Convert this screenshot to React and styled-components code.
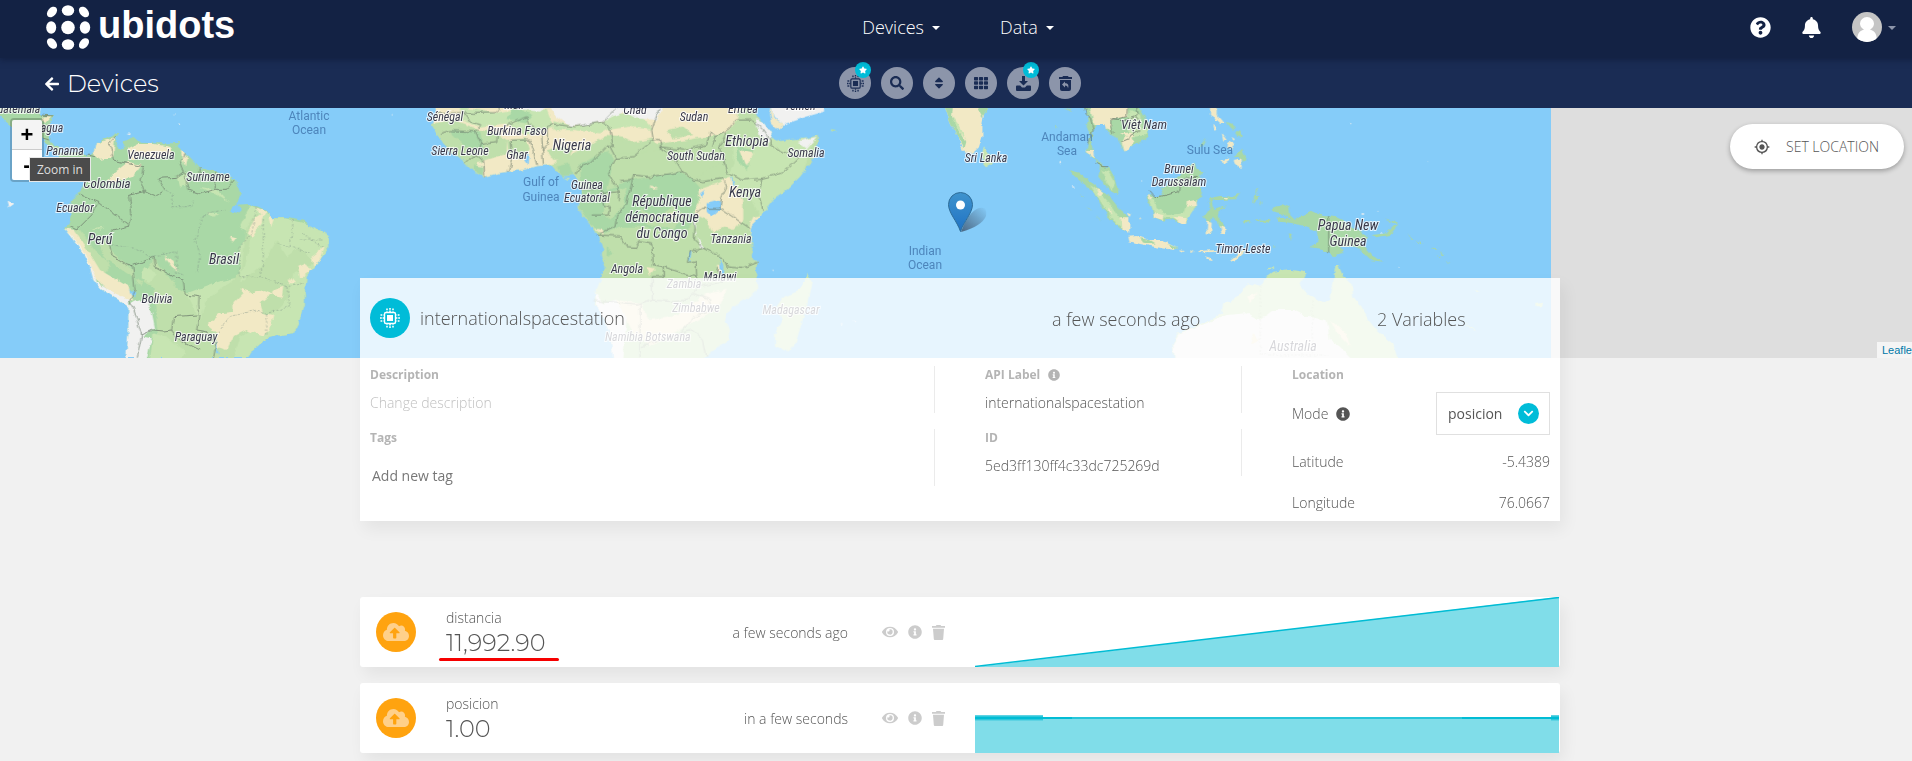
import React from "react";
import styled, { createGlobalStyle } from "styled-components";
import {
  FaArrowLeft,
  FaQuestionCircle,
  FaBell,
  FaSearch,
  FaSort,
  FaTh,
  FaStar,
  FaInfoCircle,
  FaEye,
  FaCloudUploadAlt,
  FaChevronDown,
} from "react-icons/fa";
import { MdMyLocation } from "react-icons/md";

const sans = `"Open Sans", "Noto Sans", sans-serif`;
const display = `"Montserrat", "Inter", sans-serif`;
const navy = "#1a2c54";
const cyan = "#00bcd8";

const GlobalStyle = createGlobalStyle`
  * { box-sizing: border-box; }
  body {
    margin: 0;
    background: #f1f1f1;
    color: #555;
    font: 300 14px/20px ${sans};
    overflow: hidden;
  }
  button, input, select { font: inherit; color: inherit; }
  svg { display: block; }
`;

/* The page runs 8px under the window's right edge, where the scrollbar sits. */
const Page = styled.div`
  width: calc(100% + 8px);
`;

const Center = styled.div`
  display: flex;
  align-items: center;
  justify-content: center;
`;

const Side = styled.div`
  display: flex;
  align-items: center;
  justify-content: ${(p) => (p.$end ? "flex-end" : "flex-start")};
`;

/* ---------- header ---------- */

const Header = styled.header`
  position: relative;
  z-index: 3;
  display: grid;
  grid-template-columns: 1fr auto 1fr;
  align-items: start;
  height: 58px;
  padding: 0 24px 0 20px;
  background: #132244;
  color: #fff;
  box-shadow: 0 2px 6px rgba(10, 20, 45, 0.5);
`;

const Logo = styled.a`
  display: flex;
  align-items: center;
  gap: 6px;
  height: 56px;
  padding-left: 26px;
  color: #fff;
  text-decoration: none;
  font: 700 38px/50px "Liberation Sans", sans-serif;
`;

const Wordmark = styled.span`
  padding-bottom: 6px;
`;

const NavButton = styled.button`
  display: flex;
  align-items: center;
  gap: 8px;
  height: 54px;
  padding: 0;
  border: 0;
  background: none;
  color: #fff;
  font-size: 18px;
`;

const Nav = styled.nav`
  display: flex;
  gap: 60px;
`;

const Caret = styled.span`
  border: 4px solid transparent;
  border-top-color: ${(p) => (p.$dim ? "#8c95aa" : "#fff")};
  border-bottom: 0;
  margin-top: 2px;
`;

const IconButton = styled.button`
  display: flex;
  align-items: center;
  gap: 6px;
  height: 54px;
  padding: 0;
  border: 0;
  background: none;
  color: #fff;
  font-size: 21px;
`;

const UserTools = styled(Side)`
  gap: 30px;
`;

/* ---------- toolbar ---------- */

const Toolbar = styled.div`
  display: grid;
  grid-template-columns: 1fr auto 1fr;
  height: 50px;
  padding: 0 44px;
  background: ${navy};
  color: #fff;
`;

const Back = styled.a`
  display: flex;
  align-items: center;
  gap: 7px;
  padding-top: 2px;
  color: #fff;
  text-decoration: none;
  font: 300 24px/32px ${display};
  svg { width: 16px; height: 16px; }
`;

const Tools = styled(Center)`
  gap: 10px;
`;

const Tool = styled.button`
  position: relative;
  display: flex;
  align-items: center;
  justify-content: center;
  width: 32px;
  height: 32px;
  padding: 0;
  border: 0;
  border-radius: 50%;
  background: #8c95aa;
  color: ${navy};
  font-size: 14px;
`;

const Badge = styled.span`
  position: absolute;
  top: -5px;
  right: 0;
  display: flex;
  align-items: center;
  justify-content: center;
  width: 16px;
  height: 16px;
  border-radius: 50%;
  background: ${cyan};
  color: #fff;
  font-size: 8px;
`;

/* ---------- map ---------- */

const MapPane = styled.section`
  position: relative;
  height: 250px;
  overflow: hidden;
  background: #dedede;
`;

const ZoomControl = styled.div`
  position: absolute;
  top: 10px;
  left: 10px;
  border: 2px solid rgba(0, 0, 0, 0.2);
  border-radius: 4px;
  background-clip: padding-box;
`;

const ZoomButton = styled.button`
  display: block;
  width: 30px;
  height: 30px;
  padding: 0;
  border: 0;
  border-bottom: ${(p) => (p.$first ? "1px solid #ccc" : "0")};
  border-radius: ${(p) => (p.$first ? "2px 2px 0 0" : "0 0 2px 2px")};
  background: ${(p) => (p.$first ? "#f4f4f4" : "#fff")};
  color: #000;
  font: 700 22px/26px "Liberation Sans", sans-serif;
`;

const Tooltip = styled.span`
  position: absolute;
  top: 49px;
  left: 29px;
  padding: 0 7px;
  border: 1px solid #e8e8e8;
  background: #4b4b4b;
  color: #dedede;
  font: 400 12px/23px ${sans};
`;

const SetLocation = styled.button`
  position: absolute;
  top: 16px;
  right: 16px;
  display: flex;
  align-items: center;
  gap: 16px;
  height: 45px;
  padding: 0 25px 0 24px;
  border: 0;
  border-radius: 23px;
  background: #fff;
  font-size: 14px;
  box-shadow: 0 2px 5px rgba(0, 0, 0, 0.3);
  svg { width: 16px; height: 16px; }
`;

const Attribution = styled.div`
  position: absolute;
  right: 0;
  bottom: 0;
  padding: 0 5px;
  background: rgba(255, 255, 255, 0.7);
  font: 400 11px/16px "Liberation Sans", sans-serif;
  a { color: #0078a8; text-decoration: none; }
`;

const MapText = styled.text`
  font: italic 400 ${(p) => p.$size || 12}px "Roboto Condensed", "Liberation Sans Narrow", Roboto, sans-serif;
  text-anchor: middle;
  fill: #39394a;
  stroke: rgba(255, 255, 255, 0.75);
  stroke-width: 2px;
  paint-order: stroke;
`;

const SeaText = styled.text`
  font: 400 12px Roboto, sans-serif;
  text-anchor: middle;
  fill: #4d85bb;
`;

/* ---------- device card ---------- */

const Main = styled.main`
  position: relative;
  z-index: 1;
  max-width: 1200px;
  margin: -80px auto 8px;
`;

const shadow = "4px 8px 16px rgba(0, 0, 0, 0.06)";

const Card = styled.section`
  margin-bottom: 76px;
  box-shadow: ${shadow};
`;

const CardHead = styled.div`
  display: grid;
  grid-template-columns: 1fr 325px 173px;
  align-items: center;
  height: 80px;
  padding: 0 10px;
  background: rgba(255, 255, 255, 0.8);
  font-size: 18px;
  line-height: 28px;
  > span { padding-top: 2px; }
`;

const DeviceName = styled.h1`
  display: flex;
  align-items: center;
  gap: 10px;
  margin: 0;
  font: inherit;
`;

const Round = styled.span`
  display: flex;
  align-items: center;
  justify-content: center;
  flex: none;
  width: 40px;
  height: 40px;
  border-radius: 50%;
  background: ${(p) => p.$color};
  color: ${(p) => p.$ink || "#fff"};
  font-size: 26px;
`;

const CardBody = styled.div`
  display: grid;
  grid-template-columns: 1fr 307px 308px;
  height: 163px;
  padding: 8px 10px 0;
  background: #fff;
`;

const Column = styled.div`
  display: flex;
  flex-direction: column;
  gap: 16px;
  padding-left: ${(p) => (p.$inset ? "50px" : "0")};
`;

const Field = styled.div`
  display: flex;
  flex-direction: column;
  gap: ${(p) => (p.$loose ? "19px" : "9px")};
  border-right: 1px solid #ebebeb;
`;

const FieldLabel = styled.label`
  display: flex;
  align-items: center;
  gap: 8px;
  font: 700 12px/18px ${sans};
  color: #b4b4b4;
`;

const TextInput = styled.input`
  width: 300px;
  height: 20px;
  padding: 0 ${(p) => (p.$strong ? "2px" : "0")};
  border: 0;
  background: none;
  font-weight: ${(p) => (p.$strong ? 400 : 300)};
  &::placeholder { color: ${(p) => (p.$strong ? "#777" : "#c0c0c0")}; opacity: 1; }
`;

const Location = styled.div`
  padding-left: 50px;
`;

const LocationRow = styled.div`
  display: flex;
  align-items: center;
  justify-content: space-between;
  height: ${(p) => (p.$tall ? "43px" : "36px")};
  margin-top: ${(p) => (p.$tall ? "8px" : "5px")};
  margin-bottom: ${(p) => (p.$tall ? "9px" : "0")};
`;

const ModeLabel = styled.label`
  display: flex;
  align-items: center;
  gap: 8px;
`;

const SelectBox = styled.span`
  position: relative;
  display: flex;
  align-items: center;
`;

const Select = styled.select`
  appearance: none;
  width: 114px;
  height: 43px;
  padding: 0 36px 0 11px;
  border: 1px solid #e0e0e0;
  border-radius: 0;
  background: #fff;
  font-weight: 400;
`;

const SelectMark = styled.span`
  position: absolute;
  right: 11px;
  display: flex;
  align-items: center;
  justify-content: center;
  width: 21px;
  height: 21px;
  border-radius: 50%;
  background: ${cyan};
  color: #fff;
  font-size: 11px;
  pointer-events: none;
`;

/* ---------- variables ---------- */

const VariableList = styled.div`
  display: flex;
  flex-direction: column;
  gap: 16px;
`;

const VariableRow = styled.article`
  display: flex;
  align-items: center;
  height: 70px;
  padding: 0 1px 0 16px;
  border-radius: 3px;
  background: #fff;
  box-shadow: ${shadow};
`;

const Reading = styled.div`
  flex: 1;
  padding: 2px 0 0 30px;
`;

const VariableName = styled.div`
  line-height: 20px;
`;

const Value = styled.div`
  position: relative;
  width: max-content;
  font: 300 24px/30px ${display};
`;

const RedMark = styled.span`
  position: absolute;
  left: -7px;
  bottom: -3px;
  width: 120px;
  height: 3px;
  border-radius: 2px;
  background: #f60000;
`;

const Time = styled.time`
  padding-top: 2px;
`;

const Actions = styled.div`
  display: flex;
  align-items: center;
  gap: 10px;
  margin: 0 30px 0 34px;
`;

const Action = styled.button`
  padding: 0;
  border: 0;
  background: none;
  color: #ccc;
  font-size: 14px;
`;

const ChartBox = styled.div`
  width: 584px;
  height: 70px;
`;

/* ---------- drawings ---------- */

const LogoMark = () => (
  <svg width="46" height="46" viewBox="0 0 46 46" fill="#fff" aria-hidden="true">
    <ellipse cx="22" cy="5.5" rx="6.2" ry="5.2" />
    <ellipse cx="22" cy="39.5" rx="6.2" ry="5.2" />
    <ellipse cx="5.2" cy="22.5" rx="5" ry="6.2" />
    <ellipse cx="39" cy="22.5" rx="5.2" ry="6.2" />
    <circle cx="22" cy="22.5" r="6.8" />
    <ellipse cx="6" cy="7" rx="6" ry="4.2" transform="rotate(-48 6 7)" />
    <ellipse cx="38" cy="7" rx="6" ry="4.2" transform="rotate(48 38 7)" />
    <ellipse cx="6" cy="38.5" rx="6" ry="4.2" transform="rotate(48 6 38.5)" />
    <ellipse cx="38" cy="38.5" rx="6" ry="4.2" transform="rotate(-48 38 38.5)" />
  </svg>
);

const Chip = ({ size }) => (
  <svg width={size} height={size} viewBox="0 0 20 20" fill="none" stroke="currentColor" aria-hidden="true">
    <rect x="4.5" y="4.5" width="11" height="11" rx="1.5" strokeWidth="1.400" />
    <rect x="7" y="7" width="6" height="6" fill="currentColor" stroke="none" />
    <path
      strokeWidth="1.6"
      strokeDasharray="1.800 .8"
      d="M7 .5V3.500M10 0V4M13 .5V3.500M7 19.500V16.500M10 20V16M13 19.500V16.500M.5 7H3.500M0 10H4M.5 13H3.500M19.500 7H16.500M20 10H16M19.500 13H16.500"
    />
  </svg>
);

const Download = () => (
  <svg width="15" height="15" viewBox="0 0 15 15" fill="currentColor" aria-hidden="true">
    <path d="M6 0h3v5h3L7.500 9.600 3 5h3z" />
    <path d="M1 9.500h3.200l1.800 2h3l1.800-2H14a1 1 0 0 1 1 1V14a1 1 0 0 1-1 1H1a1 1 0 0 1-1-1v-3.500a1 1 0 0 1 1-1z" />
  </svg>
);

const TrashRestore = () => (
  <svg width="13" height="15" viewBox="0 0 13 15" aria-hidden="true">
    <path fill="currentColor" d="M4 0h5l.6 1H13v2H0V1h3.400zM1 4h11v9a2 2 0 0 1-2 2H3a2 2 0 0 1-2-2z" />
    <path fill="#8c95aa" d="M6 5.500v1.800c3 0 4 1.700 3 5.200-.3-2-1-2.900-3-2.900v1.900L3 8.500z" />
  </svg>
);

const Trash = () => (
  <svg width="13" height="15" viewBox="0 0 13 15" fill="currentColor" aria-hidden="true">
    <path d="M4.500 0h4l.7 1H13v1.800H0V1h3.800zM1 3.800h11L11.200 14a1 1 0 0 1-1 1H2.800a1 1 0 0 1-1-1z" />
  </svg>
);

const Avatar = () => (
  <svg width="30" height="30" viewBox="0 0 30 30" aria-hidden="true">
    <clipPath id="avatar"><circle cx="15" cy="15" r="15" /></clipPath>
    <g clipPath="url(#avatar)">
      <path fill="#c5c5c5" d="M0 0h30v30H0z" />
      <path fill="#fff" d="M5 30c0-8 2-11 7-12.500C9 16 8 13.500 8 11.500a7 6.500 0 0 1 14 0c0 2-1 4.500-4 6 5 1.500 7 4.500 7 12.500z" />
    </g>
  </svg>
);

const AreaChart = ({ kind }) => (
  <svg width="100%" height="70" viewBox="0 0 584 70" preserveAspectRatio="none" role="img" aria-label="Recent values">
    {kind === "ramp" ? (
      <>
        <path fill="#80dde9" d="M0 70L584 0V70z" />
        <path stroke="#00bcd4" strokeWidth="1.500" d="M0 69.500L584 .5" />
      </>
    ) : (
      <>
        <path fill="#80dde9" d="M0 35H584V70H0z" />
        <path stroke="#26c6da" strokeWidth="2" d="M0 35H584" />
        <path stroke="#00bcd4" strokeWidth="2" d="M0 35H97M487 35H584" />
        <path stroke="#5fd3e3" strokeWidth="6" d="M0 35H68M576 35H584" />
        <path stroke="#00bcd4" strokeWidth="3" d="M0 35H68M576 35H584" />
      </>
    )}
  </svg>
);

const LAND = "#bfdfab";
const LIGHT = "#c7e5b2";
const LUSH = "#a9d8a6";
const SAND = "#f2e9c5";
const PALE = "#f1f1f0";
const SEA = "#85ccf9";

/* Coastlines and borders are kept on a grid three times finer than the map. */
const SouthAmerica = () => (
  <g transform="translate(0 -108) scale(.33333)">
    <clipPath id="sa">
      <path d="M262 470L285 455 290 430 315 415 335 405 345 395 358 395 345 415 355 440 372 444 372 425 400 410 420 428 460 430 520 430 540 428 530 440 555 460 575 480 600 505 650 515 690 530 705 540 720 565 725 580 710 610 690 632 712 640 725 628 712 614 750 615 775 620 800 632 820 655 870 655 910 662 950 690 975 695 985 715 985 745 960 780 940 805 920 830 915 870 915 915 900 960 880 1000 840 1005 800 1015 760 1050 745 1074 378 1074 385 1000 385 920 340 890 300 865 280 840 270 800 240 745 215 710 195 685 210 670 215 645 200 630 215 605 240 570 255 545 270 510z" />
    </clipPath>
    <path fill={LUSH} d="M0 324H115L120 345 162 345 150 365 148 410 155 432 175 440 180 460 240 455 270 475 262 500 250 500 225 475 180 470 150 440 130 415 100 390 60 375 30 375 0 350z" />
    <path fill={SAND} d="M125 350L155 348 135 370z" />
    <g clipPath="url(#sa)">
      <path fill={LUSH} d="M180 380H1000V1080H180z" />
      <path fill={LIGHT} d="M750 615L800 640 990 690 990 800 915 870 915 1000 740 1080 480 1080 520 960 560 880 640 850 720 830 720 740 750 700 720 680z" />
      <path fill={LAND} d="M740 680L770 640 790 660 750 720 735 800 700 840 620 900 600 960 560 880 530 860 460 775 420 860 390 800 340 760 320 720 300 740 330 800 300 840 190 690 240 690 290 760 380 820 460 860 480 1080 700 1080 720 1010 800 960 860 900 880 820 940 790 900 740 860 770 830 720 790 790 720 850z" />
      <path fill={SAND} d="M290 430L320 420 345 410 340 470 300 480 280 465zM385 445L410 432 460 432 510 440 520 460 480 475 430 470 390 480zM340 520L385 485 425 495 400 530 350 545 320 550zM540 430L560 470 555 500 545 470z" />
      <path fill={SAND} d="M195 685L220 690 260 745 300 810 385 860 400 905 340 885 280 830 240 740z" />
      <path fill={PALE} d="M190 680L215 705 245 745 278 810 290 845 335 875 390 900 385 925 330 900 270 850z" />
      <path fill={PALE} d="M380 920L405 905 440 895 455 935 465 985 430 1010 455 1015 440 1080 375 1080z" />
      <path fill={SAND} d="M700 910L730 880 720 865 760 880 790 870 820 880 780 910 790 940 820 945 810 990 790 1010 740 990 700 1010 680 1050 650 1040 650 1000 620 975 660 940 700 935zM490 765L520 785 535 815 515 800zM895 800L920 790 935 810 900 835zM740 700L765 655 790 640 785 670 755 715zM765 620L800 635 790 650zM935 770L975 740 960 780 940 800zM820 870L850 860 845 890 820 885zM830 640L815 680 808 650zM870 830L885 850 870 850zM690 710L710 715 700 728z" />
      <path fill={LIGHT} d="M530 530L560 520 565 550 540 560zM270 685L310 680 300 690zM430 800L470 820 450 850 425 835zM620 640L655 643 640 650zM600 560L650 570 690 610 660 590zM460 1000L500 1010 560 1060 540 1074 450 1074z" />
      <path fill={SEA} d="M350 430L360 420 372 430 368 448 352 446zM388 870L405 880 406 892 392 885zM650 1020L655 1060 648 1060z" />
    </g>
    <path fill={LUSH} d="M715 614L750 612 745 628 722 632zM532 424L540 422 540 432z" />
    <path fill={PALE} d="M380 402L392 400 390 406zM20 605L40 614 25 625zM520 340L525 342 524 346zM540 365L543 372 539 372z" />
    <g fill="none" stroke="#6d7b6c" strokeOpacity=".75" strokeWidth="3">
      <path d="M348 405L330 430 340 480 380 490 430 500 423 540 435 575 388 585 395 640 385 678 340 690 325 715 335 765 375 790 398 797 462 772 466 800 520 830 550 840 555 885 597 890 596 910 598 940 590 990 620 995 650 1030 640 1074" />
      <path d="M435 575L465 590 495 570 475 535 530 532 550 515 540 490 555 460M550 515L565 570 600 582 645 568 680 568 702 540M600 505L600 545M650 515L645 565M238 582L295 605 275 645 230 690 210 680M295 605L320 625 350 650 385 678M398 797L405 870 388 905 400 925 425 1005 460 990 490 993 515 990 520 950 590 945M515 990L530 1015 600 1050M425 1005L412 1070M262 465L285 470M120 345L160 348M130 415L150 420" />
    </g>
    <g fill="none" stroke="#7c8f86" strokeOpacity=".55" strokeWidth="2.500" strokeDasharray="7 5">
      <path d="M500 570L520 585 515 620 575 620 580 600M335 735L405 745 450 770 530 755 530 820 550 825M610 645L585 720 600 765 590 820M610 645L680 630M720 740L720 830 780 830 860 860 910 850M770 620L755 700 720 740M790 660L790 780 780 830M880 660L870 740 830 730M900 720L970 720M905 700L975 745M860 860L870 920 800 940 770 930 690 950 650 1000M800 940L800 1010M930 760L880 740" />
    </g>
  </g>
);

const Africa = () => (
  <g transform="translate(340 -8) scale(.33333)">
    <clipPath id="af">
      <path d="M285 20L290 45 275 75 290 100 310 130 345 165 375 190 400 215 432 232 470 220 505 215 550 210 590 198 635 196 650 215 670 230 700 225 712 240 722 265 722 290 712 320 730 350 760 385 775 405 790 450 785 465 800 500 785 530 765 580 765 610 790 650 810 700 820 780 1085 780 1130 745 1165 720 1170 690 1155 660 1165 630 1215 600 1255 565 1250 500 1250 485 1235 470 1240 430 1230 400 1235 375 1265 345 1300 300 1340 270 1380 230 1410 190 1430 150 1435 105 1400 115 1350 118 1310 125 1290 115 1300 95 1280 85 1265 65 1235 20z" />
    </clipPath>
    <g clipPath="url(#af)">
      <path fill={LAND} d="M260 10H1440V790H260z" />
      <path fill={SAND} d="M285 20H1200L1190 60 1160 100 1100 110 1040 120 960 130 900 140 850 110 800 105 760 130 700 160 660 170 640 190 560 210 470 222 430 232 410 190 440 180 500 160 500 120 470 100 420 90 340 60 280 70z" />
      <path fill={LIGHT} d="M360 20L470 40 560 24 620 30 640 80 560 110 500 70 420 80 360 60zM640 60L700 80 790 65 830 40 900 45 940 90 870 80 800 90 780 100 700 90 640 90zM1180 120L1300 110 1420 115 1390 220 1260 350 1230 300 1160 240 1180 190z" />
      <path fill={LAND} d="M800 110L860 130 940 115 960 150 900 160 820 160zM620 150L660 140 700 150 680 175 640 180zM500 120L560 115 570 150 540 180 505 160zM980 90L1030 80 1060 105 1000 115z" />
      <path fill={PALE} d="M630 20H970L950 60 890 55 850 35 800 60 740 75 690 78 650 50zM1245 50L1270 70 1300 95 1285 125 1255 100zM1370 125L1430 110 1400 145zM500 20L620 20 600 35 560 30z" />
      <path fill={LUSH} d="M720 195L800 150 820 180 815 220 800 270 870 240 940 230 1020 215 1060 240 1085 270 1070 330 1050 380 1020 400 960 390 890 380 840 380 790 400 750 370 715 320 725 270zM400 195L430 200 430 230 400 210zM330 90L420 95 430 150 380 140 340 110zM1190 140L1240 150 1220 210 1190 180zM650 200L690 190 700 225 665 228zM800 440L820 460 800 470zM520 20L500 60 560 70 580 45z" />
      <path fill={LAND} d="M800 280L860 260 850 320 810 360 790 340zM900 330L960 345 1000 320 1040 350 1000 385 920 375z" />
      <path fill={SAND} d="M1075 270L1130 250 1170 230 1190 260 1210 300 1210 360 1180 390 1150 380 1120 400 1100 360 1060 340 1080 310zM1230 370L1240 350 1270 345 1230 400zM765 385L790 390 790 405zM925 258L955 265 940 270zM985 340L1010 335 1000 360zM1200 150L1240 160 1220 200zM1130 490L1150 500 1140 530zM920 500L945 505 930 525z" />
      <path fill={LAND} d="M1070 130L1140 100 1150 180 1060 240 980 160z" />
      <path fill={PALE} d="M765 580L790 610 830 600 860 650 850 780 800 780zM1060 360L1070 360 1066 400 1090 440 1080 445z" />
      <path fill={SAND} d="M830 600L900 610 930 660 1000 650 1100 580 1160 570 1140 620 1000 700 930 740 880 700z" />
      <path fill={SEA} d="M1100 310L1140 300 1142 325 1115 350 1100 335zM1080 280L1095 270 1085 290zM1045 465L1055 450 1050 490zM1140 470L1150 500 1148 540 1142 520zM1172 225L1188 260 1180 260zM555 160L568 165 566 195 555 180z" />
    </g>
    <path fill={PALE} d="M1295 20H1452V35L1400 50 1330 75 1300 50z" />
    <path fill={SAND} d="M1295 20L1300 55 1330 72 1310 86 1295 70 1290 40z" />
    <path fill={LIGHT} d="M1400 517L1415 545 1410 570 1400 620 1385 670 1365 735 1335 755 1305 740 1305 700 1325 660 1310 620 1330 590 1380 570 1395 540zM1472 88L1488 90 1475 94zM675 235L690 232 685 240z" />
    <path fill={PALE} d="M1505 672L1512 674 1508 679zM1540 658L1546 660 1542 664zM155 42L159 44 157 48zM1300 508L1304 510 1302 514z" />
    <g fill="none" stroke="#6d7b6c" strokeOpacity=".75" strokeWidth="3">
      <path d="M290 40L370 38 400 40 470 38 480 20M370 38L385 62 420 75 405 95 330 92 300 100M405 95L422 130 410 165 432 185 434 232M375 188L395 170 410 165M422 130L470 125 472 105 500 75 560 50 570 75 610 100 625 80 640 72 700 80 790 65 830 25M510 120L515 175 505 215M510 120L570 120 580 150 590 195M605 105L610 195M625 80L625 130 607 150" />
      <path d="M790 65L810 90 820 140 800 138 750 190 720 200 708 222M810 140L828 175 805 220 838 275 835 300M828 175L880 170 940 120 958 118 965 150 1000 170 1028 215 1060 240 1090 245M940 120L935 90 945 60 960 24M958 140L1030 150 1100 135 1110 95 1125 110 1115 140M1125 110L1160 95 1185 60 1235 60 1270 90 1290 120 1290 135 1340 160 1380 170M1380 170L1325 220 1265 235 1205 240 1160 215 1150 175 1140 140 1160 95M1265 235L1258 290 1270 335M1090 245L1150 235 1160 260 1145 290 1140 325 1085 325 1062 345M1140 325L1230 385M1060 345L1065 380 1063 420 1090 445 1150 475 1160 500 1205 505 1250 487" />
      <path d="M880 225L930 230 1000 220 1028 215M880 225L875 250 860 310 830 350 825 380 780 400M838 245L880 240M720 268H785V280L838 275M785 280L790 315 808 320 805 345 755 345M770 405L840 408 860 440 890 442 900 425 935 432 940 495 970 500 970 530 937 530V600L890 615 760 602M970 500L1030 520 1070 530 1068 485 1045 490 1050 455 1090 445M937 600L1000 605 1040 600 1075 560 1150 545 1130 500M900 615V775M905 740L1020 700 1060 650 1120 630 1110 600 1060 580M1020 700L1060 690 1090 720 1100 770" />
    </g>
  </g>
);

const India = () => (
  <g transform="translate(820 -108) scale(.357 .33333)">
    <path fill={SAND} d="M350 320L365 365 385 410 400 450 425 465 445 445 455 410 455 370 460 340 475 320z" />
    <path fill={LUSH} d="M350 320L365 365 385 410 402 445 407 425 385 385 370 350 372 320zM440 320L475 320 455 350z" />
    <path fill={LIGHT} d="M372 350L392 380 410 420 395 400 376 370zM455 455L460 440 478 465 482 490 465 502 455 490z" />
    <path fill={LUSH} d="M655 378L660 380 658 390zM680 324H705L700 330zM30 388L45 390 36 393z" />
    <path fill={PALE} d="M0 320H12L0 340zM672 483L676 485 673 490z" />
  </g>
);

const Oceania = () => (
  <g transform="translate(1040 -8) scale(.33333)">
    <path fill={LUSH} d="M130 20L145 50 140 80 150 105 148 125 140 155 155 170 165 175 180 200 175 230 195 255 215 275 235 285 235 265 225 235 205 205 180 190 160 165 155 130 160 90 170 75 190 75 200 90 215 100 230 115 240 130 255 158 270 140 300 130 325 110 327 75 315 45 300 20z" />
    <path fill={SAND} d="M150 20H262L265 50 235 55 212 65 212 90 195 85 190 75 165 75 158 60zM255 110L275 105 285 125 255 158 245 130zM140 150L160 150 162 172 150 165zM240 100L290 95 275 115z" />
    <path fill={LIGHT} d="M270 30L300 40 305 80 325 90 320 105 285 110 260 90zM185 210L205 215 225 250 215 270 195 240z" />
    <path fill={LUSH} d="M88 210L120 218 135 235 165 255 185 275 205 285 225 310 240 330 265 350 268 400 240 385 205 350 185 320 165 280 130 250 105 230z" />
    <path fill={LIGHT} d="M150 255L180 275 200 300 235 350 262 360 262 395 230 372 195 325z" />
    <path fill={SAND} d="M170 265L190 280 180 290zM242 352L268 352 268 402 246 385zM205 325L215 340 205 335z" />
    <path fill={SAND} d="M265 410L290 408 330 420 370 420 410 440 400 450 350 442 300 432 268 424zM418 448L432 450 422 455zM448 450L465 456 450 458zM478 452L530 450 530 456 480 457zM492 468L515 475 518 480 500 476zM570 480L600 455 622 446 592 475 575 484z" />
    <path fill={LUSH} d="M300 415L330 420 350 432 310 428zM385 430L412 442 395 446z" />
    <path fill={LUSH} d="M320 290L330 278 345 290 370 285 360 262 390 250 420 225 440 195 465 190 470 210 495 215 475 235 480 270 490 290 470 300 465 320 445 345 440 370 425 372 400 358 365 362 340 350 335 320 325 310z" />
    <path fill={LIGHT} d="M322 290L345 300 350 325 385 345 430 340 440 310 468 300 460 330 440 360 400 355 345 350 335 318z" />
    <path fill={SAND} d="M322 282L338 290 330 302zM340 340L370 345 368 360 342 352zM400 350L440 355 438 372 424 372zM440 305L465 300 468 318 440 320z" />
    <path fill={LUSH} d="M500 395L510 370 490 350 510 320 505 295 540 288 580 290 598 280 585 298 540 300 515 300 520 330 558 318 535 335 540 360 555 375 550 400 530 365 518 350 512 365 515 402z" />
    <path fill={SAND} d="M502 362L515 365 514 402 500 400zM540 378L558 385 560 400 545 398zM545 291L565 291 560 296zM300 352L306 354 304 360zM260 335L272 340 270 354z" />
    <path fill={SAND} d="M510 20H530L530 45 545 62 560 70 540 68 525 55 510 45zM545 100L560 120 550 125zM565 125L582 132 572 150 562 140zM520 75L530 82 525 95zM580 180L605 175 605 205 585 192zM545 180L575 175 560 185 548 195zM575 110L585 118 580 122z" />
    <path fill={LUSH} d="M560 65L585 75 580 90 570 80zM585 92L602 95 605 115 592 110zM590 160L605 145 620 180 610 185 600 170 582 172zM480 140L500 115 490 140z" />
    <path fill={LUSH} d="M640 310L642 290 650 265 655 265 645 285 658 285 648 300zM612 360H630L628 368 614 367zM645 358L690 360 690 368 650 362zM750 400L758 402 752 424zM660 300L664 308 660 318zM700 435L706 437 702 442z" />
    <path fill={LUSH} d="M695 325L725 312 748 322 750 345 765 360 790 345 815 332 850 348 880 350 920 370 960 395 985 410 960 425 985 450 1005 475 1030 485 990 480 965 455 950 440 900 440 910 460 880 465 860 455 845 450 812 445 820 435 835 425 830 395 800 380 760 370 720 365 712 352 750 360 725 340 700 335z" />
    <path fill={LUSH} d="M995 405L1040 400 1062 378 1072 378 1050 405 1010 412zM1035 355L1060 370 1074 380 1066 366zM1102 403L1120 420 1115 420zM1130 422L1148 428 1140 430zM1172 443L1190 450 1180 450zM1200 452L1212 465 1205 465zM1190 465L1204 472 1198 474zM1218 484L1230 488 1224 491z" />
    <path fill={LIGHT} d="M403 780L398 730 415 700 460 680 510 660 545 640 550 605 570 610 600 580 625 550 660 560 680 530 700 515 740 508 790 515 797 520 780 555 800 580 850 610 870 600 880 550 885 495 895 495 910 530 935 550 940 590 965 620 985 660 1010 690 1060 730 1073 780zM682 504L705 502 700 508 684 508z" />
    <path fill={PALE} d="M405 780L400 730 420 700 500 670 560 645 620 640 660 660 700 630 760 630 800 650 860 660 870 720 900 740 940 780z" />
    <path fill={SAND} d="M620 590L650 580 630 610zM870 660L920 700 930 740 890 700zM640 700L660 720 630 730z" />
    <path fill={LIGHT} d="M1275 665L1310 695 1290 685zM1485 612L1510 608 1505 620 1490 618zM1305 568L1320 578 1310 576z" />
    <path fill={PALE} d="M930 71L934 73 932 77zM1160 186L1164 188 1162 190zM58 184L62 186 60 190zM96 258L106 262 98 263zM305 236L309 239 306 241zM965 340H972V344H965zM1012 332L1016 334 1012 336zM1020 396L1026 398 1022 402zM1076 500L1080 502 1077 504z" />
    <path fill={LUSH} d="M120 285L130 292 124 290zM140 320L152 332 144 328zM168 345L184 362 172 352z" />
    <g fill="none" stroke="#6d7b6c" strokeOpacity=".75" strokeWidth="3">
      <path d="M135 24L140 45 152 55 160 90 145 130M262 24L260 50 215 60 210 75 220 100M215 60L250 62 285 50 295 40 290 24M285 50L298 65 295 95 270 105 265 120 245 128M170 190L190 200 205 200M330 272L345 290 370 288 415 275 425 240 435 235 470 232M866 348V462" />
      <path strokeOpacity=".3" strokeDasharray="6 5" d="M661 560V765H866M817 600V765" />
    </g>
  </g>
);

const landLabels = [
  ["uatemala", 19, 5], ["agua", 52, 24], ["Panama", 65, 47], ["Venezuela", 151, 51],
  ["Suriname", 208, 73], ["Colombia", 107, 80, 13], ["Ecuador", 75, 104],
  ["Perú", 100, 136, 14], ["Brasil", 224, 156, 14], ["Bolivia", 157, 195], ["Paraguay", 196, 233],
  ["Mali", 514, 1], ["Chad", 635, 6], ["Sénégal", 445, 13], ["Burkina Faso", 517, 27],
  ["Nigeria", 572, 42, 14], ["Sierra Leone", 460, 47], ["Ghar", 517, 51], ["Sudan", 694, 13],
  ["Eritrea", 743, 5], ["Yemen", 800, 2], ["Ethiopia", 747, 38, 14], ["South Sudan", 696, 52],
  ["Somalia", 806, 49], ["Guinea", 587, 81], ["Ecuatorial", 587, 94], ["Kenya", 745, 89, 14],
  ["République", 662, 98, 14], ["démocratique", 662, 114, 14], ["du Congo", 662, 130, 14],
  ["Tanzania", 731, 135], ["Angola", 627, 165], ["Malawi", 720, 173], ["Zambia", 684, 180],
  ["Zimbabwe", 696, 204], ["Madagascar", 791, 206], ["Namibia", 624, 233], ["Botswana", 668, 233],
  ["Sri Lanka", 986, 54], ["Việt Nam", 1144, 21, 13], ["Brunei", 1179, 65], ["Darussalam", 1179, 78],
  ["Papua New", 1348, 122, 14], ["Guinea", 1348, 138, 14], ["Timor-Leste", 1243, 145], ["Australia", 1293, 243, 14],
];

const seaLabels = [
  ["Atlantic", 309, 12], ["Ocean", 309, 26], ["Gulf of", 541, 78], ["Guinea", 541, 93],
  ["Indian", 925, 147], ["Ocean", 925, 161], ["Andaman", 1067, 33], ["Sea", 1067, 47], ["Sulu Sea", 1210, 46],
];

const WorldMap = () => (
  <svg width="1551" height="250" viewBox="0 0 1551 250" role="img" aria-label="Map">
    <defs>
      <filter id="coast" x="0" y="0" width="1551" height="250" filterUnits="userSpaceOnUse">
        <feTurbulence type="fractalNoise" baseFrequency=".13" numOctaves="3" seed="4" />
        <feDisplacementMap in="SourceGraphic" scale="5" xChannelSelector="R" yChannelSelector="G" />
      </filter>
      <linearGradient id="pin" x1="0" y1="0" x2="0" y2="1">
        <stop offset="0" stopColor="#3f93cd" />
        <stop offset="1" stopColor="#1f72c4" />
      </linearGradient>
      <linearGradient id="pinShade" x1="0" y1="1" x2="1" y2="0">
        <stop offset="0" stopColor="#223" stopOpacity=".6" />
        <stop offset="1" stopColor="#223" stopOpacity="0" />
      </linearGradient>
    </defs>
    <rect width="1551" height="250" fill={SEA} />
    <g filter="url(#coast)">
      <SouthAmerica />
      <Africa />
      <India />
      <Oceania />
    </g>
    {seaLabels.map(([t, x, y]) => <SeaText key={t + x} x={x} y={y}>{t}</SeaText>)}
    {landLabels.map(([t, x, y, s]) => <MapText key={t + x + y} x={x} y={y} $size={s}>{t}</MapText>)}
    <path fill="url(#pinShade)" d="M961 124Q968 104 979 100 988 98 986 108 982 118 961 124z" />
    <path
      fill="url(#pin)"
      stroke="#2e6c97"
      d="M960.500 123.500C957 113 948.500 105 948.500 96.500a12 12 0 0 1 24 0C972.500 105 964 113 960.500 123.500z"
    />
    <circle cx="960.500" cy="97" r="4.500" fill="#fff" />
  </svg>
);

/* ---------- page ---------- */

const tools = [
  { label: "Add device", icon: <Chip size={17} />, starred: true },
  { label: "Search", icon: <FaSearch /> },
  { label: "Sort", icon: <FaSort /> },
  { label: "Grid view", icon: <FaTh /> },
  { label: "Download", icon: <Download />, starred: true },
  { label: "Restore", icon: <TrashRestore /> },
];

const variables = [
  { name: "distancia", value: "11,992.90", time: "a few seconds ago", kind: "ramp", marked: true },
  { name: "posicion", value: "1.00", time: "in a few seconds", kind: "flat" },
];

const Variable = ({ name, value, time, kind, marked }) => (
  <VariableRow>
    <Round $color="#ffa30f" $ink="#ffd08a"><FaCloudUploadAlt /></Round>
    <Reading>
      <VariableName>{name}</VariableName>
      <Value>{value}{marked && <RedMark />}</Value>
    </Reading>
    <Time>{time}</Time>
    <Actions>
      <Action aria-label={`View ${name}`}><FaEye size={16} /></Action>
      <Action aria-label={`About ${name}`}><FaInfoCircle /></Action>
      <Action aria-label={`Delete ${name}`}><Trash /></Action>
    </Actions>
    <ChartBox><AreaChart kind={kind} /></ChartBox>
  </VariableRow>
);

export default function App() {
  return (
    <Page>
      <GlobalStyle />
      <Header>
        <Side>
          <Logo href="#"><LogoMark /><Wordmark>ubidots</Wordmark></Logo>
        </Side>
        <Nav>
          <NavButton>Devices <Caret /></NavButton>
          <NavButton>Data <Caret /></NavButton>
        </Nav>
        <UserTools $end>
          <IconButton aria-label="Help"><FaQuestionCircle /></IconButton>
          <IconButton aria-label="Notifications"><FaBell /></IconButton>
          <IconButton aria-label="Account"><Avatar /><Caret $dim /></IconButton>
        </UserTools>
      </Header>

      <Toolbar>
        <Side><Back href="#"><FaArrowLeft />Devices</Back></Side>
        <Tools>
          {tools.map((t) => (
            <Tool key={t.label} aria-label={t.label}>
              {t.icon}
              {t.starred && <Badge><FaStar /></Badge>}
            </Tool>
          ))}
        </Tools>
      </Toolbar>

      <MapPane>
        <WorldMap />
        <ZoomControl>
          <ZoomButton $first aria-label="Zoom in">+</ZoomButton>
          <ZoomButton aria-label="Zoom out">-</ZoomButton>
        </ZoomControl>
        <Tooltip>Zoom in</Tooltip>
        <SetLocation><MdMyLocation />SET LOCATION</SetLocation>
        <Attribution><a href="#">Leaflet</a></Attribution>
      </MapPane>

      <Main>
        <Card>
          <CardHead>
            <DeviceName>
              <Round $color={cyan}><Chip size={20} /></Round>
              internationalspacestation
            </DeviceName>
            <span>a few seconds ago</span>
            <span>2 Variables</span>
          </CardHead>
          <CardBody>
            <Column>
              <Field>
                <FieldLabel htmlFor="description">Description</FieldLabel>
                <TextInput id="description" placeholder="Change description" />
              </Field>
              <Field $loose>
                <FieldLabel htmlFor="tags">Tags</FieldLabel>
                <TextInput id="tags" placeholder="Add new tag" $strong />
              </Field>
            </Column>
            <Column $inset>
              <Field>
                <FieldLabel as="div">API Label <FaInfoCircle /></FieldLabel>
                <span>internationalspacestation</span>
              </Field>
              <Field>
                <FieldLabel as="div">ID</FieldLabel>
                <span>5ed3ff130ff4c33dc725269d</span>
              </Field>
            </Column>
            <Location>
              <FieldLabel as="div">Location</FieldLabel>
              <LocationRow $tall>
                <ModeLabel htmlFor="mode">Mode <FaInfoCircle size={14} /></ModeLabel>
                <SelectBox>
                  <Select id="mode" defaultValue="posicion"><option>posicion</option></Select>
                  <SelectMark><FaChevronDown /></SelectMark>
                </SelectBox>
              </LocationRow>
              <LocationRow><span>Latitude</span><span>-5.4389</span></LocationRow>
              <LocationRow><span>Longitude</span><span>76.0667</span></LocationRow>
            </Location>
          </CardBody>
        </Card>

        <VariableList>
          {variables.map((v) => <Variable key={v.name} {...v} />)}
        </VariableList>
      </Main>
    </Page>
  );
}
